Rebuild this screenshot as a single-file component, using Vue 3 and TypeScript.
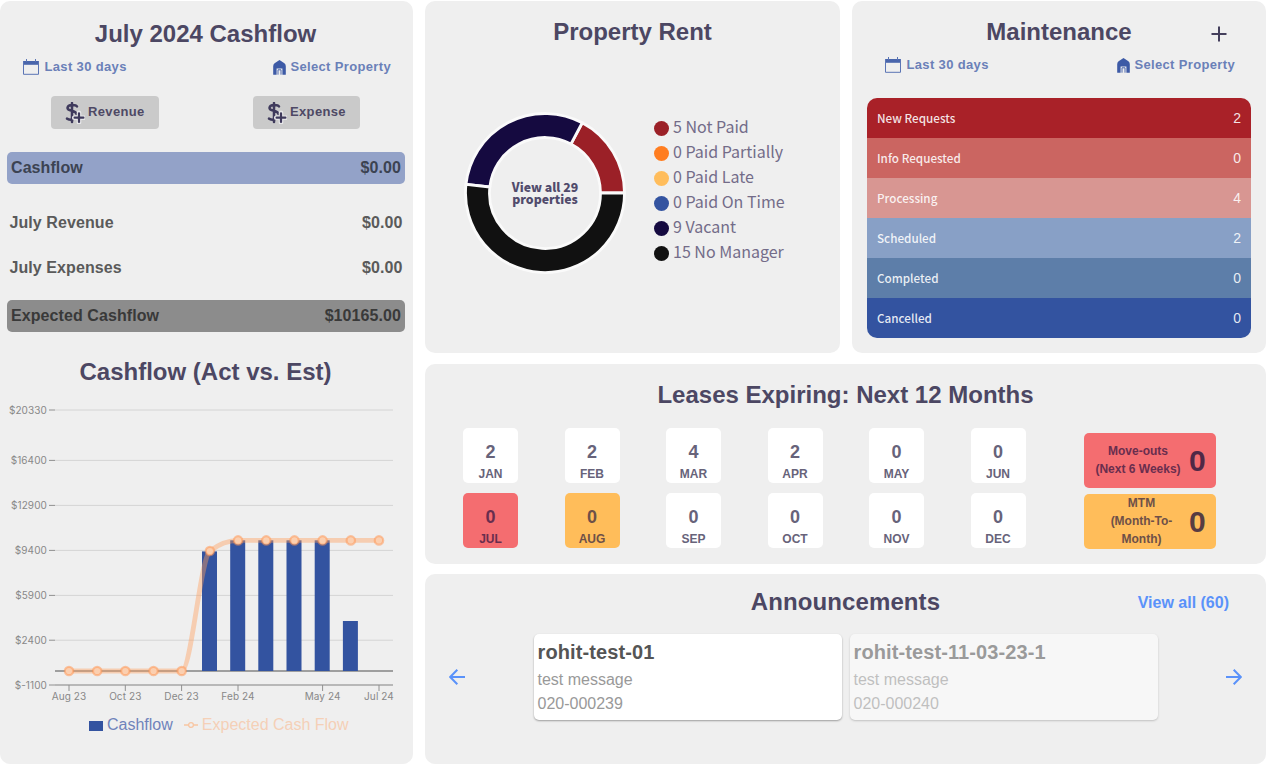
<script setup lang="ts">
const summary = [
  { label: 'Cashflow', value: '$0.00', tone: 'blue' },
  { label: 'July Revenue', value: '$0.00', tone: 'plain' },
  { label: 'July Expenses', value: '$0.00', tone: 'plain' },
  { label: 'Expected Cashflow', value: '$10165.00', tone: 'gray' },
]

const rent = [
  { count: 5, label: 'Not Paid', color: '#9b2027' },
  { count: 0, label: 'Paid Partially', color: '#ff7d20' },
  { count: 0, label: 'Paid Late', color: '#ffbd5c' },
  { count: 0, label: 'Paid On Time', color: '#3353a0' },
  { count: 9, label: 'Vacant', color: '#150a40' },
  { count: 15, label: 'No Manager', color: '#111111' },
]

function buildSlices() {
  const total = rent.reduce((sum, r) => sum + r.count, 0)
  const outer = 79.5
  const inner = 55.5
  const point = (r: number, a: number) =>
    `${(82 + r * Math.cos(a)).toFixed(2)} ${(82 - r * Math.sin(a)).toFixed(2)}`
  let angle = 0
  return rent
    .filter((r) => r.count > 0)
    .map((r) => {
      const start = angle
      const end = angle + (r.count / total) * Math.PI * 2
      angle = end
      const large = end - start > Math.PI ? 1 : 0
      return {
        color: r.color,
        d: `M${point(outer, start)}A${outer} ${outer} 0 ${large} 0 ${point(outer, end)}L${point(inner, end)}A${inner} ${inner} 0 ${large} 1 ${point(inner, start)}Z`,
      }
    })
}
const slices = buildSlices()

const maintenance = [
  { label: 'New Requests', count: 2, tone: 'm0' },
  { label: 'Info Requested', count: 0, tone: 'm1' },
  { label: 'Processing', count: 4, tone: 'm2' },
  { label: 'Scheduled', count: 2, tone: 'm3' },
  { label: 'Completed', count: 0, tone: 'm4' },
  { label: 'Cancelled', count: 0, tone: 'm5' },
]

const months = [
  { name: 'JAN', count: 2, tone: '' },
  { name: 'FEB', count: 2, tone: '' },
  { name: 'MAR', count: 4, tone: '' },
  { name: 'APR', count: 2, tone: '' },
  { name: 'MAY', count: 0, tone: '' },
  { name: 'JUN', count: 0, tone: '' },
  { name: 'JUL', count: 0, tone: 'red' },
  { name: 'AUG', count: 0, tone: 'amber' },
  { name: 'SEP', count: 0, tone: '' },
  { name: 'OCT', count: 0, tone: '' },
  { name: 'NOV', count: 0, tone: '' },
  { name: 'DEC', count: 0, tone: '' },
]

const announcements = [
  { title: 'rohit-test-01', message: 'test message', code: '020-000239', faded: false },
  { title: 'rohit-test-11-03-23-1', message: 'test message', code: '020-000240', faded: true },
]

const yTicks = [
  { label: '$20330', y: 20 },
  { label: '$16400', y: 70.4 },
  { label: '$12900', y: 115.4 },
  { label: '$9400', y: 160.4 },
  { label: '$5900', y: 205.4 },
  { label: '$2400', y: 250.2 },
  { label: '$-1100', y: 295 },
]
const xTicks = [
  { label: 'Aug 23', x: 69 },
  { label: 'Oct 23', x: 125.3 },
  { label: 'Dec 23', x: 181.6 },
  { label: 'Feb 24', x: 238 },
  { label: 'May 24', x: 322.6 },
  { label: 'Jul 24', x: 379 },
]
const bars = [
  { x: 202, y: 161.4 },
  { x: 230.2, y: 150.3 },
  { x: 258.3, y: 150.3 },
  { x: 286.5, y: 150.3 },
  { x: 314.7, y: 150.3 },
  { x: 342.9, y: 231 },
]
const points = Array.from({ length: 12 }, (_, i) => ({
  x: 69 + i * 28.18,
  y: i < 5 ? 281 : i === 5 ? 161 : 150.4,
}))
</script>

<template>
  <main class="board">
    <section class="panel cash">
      <h2>July 2024 Cashflow</h2>
      <div class="filters">
        <span class="filter">
          <svg class="cal" width="16" height="16" viewBox="0 0 16 16"><path d="M.5 2h15v3.800H.5z" fill="#4a66ac" /><path d="M.5 2v13.300h15V2M3.500 0v3M12.500 0v3" fill="none" stroke="#5b75b5" stroke-width="1" /></svg>
          Last 30 days
        </span>
        <span class="filter">
          <svg class="home" width="13" height="15" viewBox="0 0 13 15"><path d="M6.500 0 1.600 3.300Q.2 4.500 .2 6.200V14.700H3.600V8.500H9.400V14.700H12.800V6.200Q12.800 4.500 11.400 3.300Z" fill="#3d5aa6" /><path d="M5 14.700V9.800H8V14.700" fill="none" stroke="#3d5aa6" stroke-width=".9" /></svg>
          Select Property
        </span>
      </div>
      <div class="actions">
        <button v-for="name in ['Revenue', 'Expense']" :key="name" type="button">
          <svg width="20" height="22" viewBox="0 0 20 22"><path d="M12 4.500C11 2.700 3 1.800 2.500 5.800 2.300 9.500 11 8 11.500 12M2 16.600Q4.500 18 7.500 17.500M7 1V20" fill="none" stroke="#3f3a5c" stroke-width="2.500" stroke-linecap="round" /><path d="M14 10.800V20.500M9.200 15.700H18.800" stroke="#e6e6e8" stroke-width="4.600" stroke-linecap="round" /><path d="M14 11.300V20M9.600 15.700H18.400" stroke="#3f3a5c" stroke-width="2.200" stroke-linecap="round" /></svg>
          <span>{{ name }}</span>
        </button>
      </div>
      <div class="summary">
        <div v-for="row in summary" :key="row.label" class="sum-row" :class="row.tone">
          <span>{{ row.label }}</span><span>{{ row.value }}</span>
        </div>
      </div>
      <h2 class="chart-title">Cashflow (Act vs. Est)</h2>
      <svg class="chart" width="413" height="314" viewBox="0 0 413 314">
        <g v-for="t in yTicks" :key="t.label">
          <line x1="55" x2="393" :y1="t.y" :y2="t.y" stroke="#d4d4d4" />
          <line x1="49" x2="55" :y1="t.y" :y2="t.y" stroke="#909090" />
          <text x="47" :y="t.y + 3.900" text-anchor="end">{{ t.label }}</text>
        </g>
        <line x1="55" x2="393" y1="295" y2="295" stroke="#aaa" stroke-width="1.600" />
        <g v-for="t in xTicks" :key="t.label">
          <line :x1="t.x" :x2="t.x" y1="295" y2="301" stroke="#909090" />
          <text :x="t.x" y="310" text-anchor="middle">{{ t.label }}</text>
        </g>
        <line x1="55" x2="393" y1="281" y2="281" stroke="#858585" stroke-width="1.600" />
        <rect v-for="b in bars" :key="b.x" :x="b.x" :y="b.y" width="15" :height="281 - b.y" fill="#3353a0" />
        <path d="M69 281H181.700C191.100 281 200.400 168.100 209.900 161C219.300 153.900 228.700 150.400 238.100 150.400H379" fill="none" stroke="#ff9e5a" stroke-opacity=".42" stroke-width="4.800" />
        <circle v-for="p in points" :key="p.x" :cx="p.x" :cy="p.y" r="4.200" fill="#fbcfb0" stroke="#ff9450" stroke-opacity=".5" stroke-width="2.200" />
      </svg>
      <div class="legend">
        <i class="square"></i><span class="l-blue">Cashflow</span>
        <svg width="14" height="8" viewBox="0 0 14 8"><path d="M0 4H4.500M9.500 4H14" stroke="#f8c6a3" stroke-width="1.500" /><circle cx="7" cy="4" r="2.400" fill="none" stroke="#f8c6a3" stroke-width="1.300" /></svg>
        <span class="l-orange">Expected Cash Flow</span>
      </div>
    </section>

    <section class="panel rent">
      <h2>Property Rent</h2>
      <div class="rent-body">
        <div class="donut">
          <svg width="164" height="164" viewBox="0 0 164 164">
            <path v-for="s in slices" :key="s.color" :d="s.d" :fill="s.color" stroke="#fafafa" stroke-width="2.800" />
          </svg>
          <div class="donut-label">View all 29<br />properties</div>
        </div>
        <ul class="rent-list">
          <li v-for="r in rent" :key="r.label">
            <svg width="15" height="15"><circle cx="7.500" cy="7.500" r="7.500" :fill="r.color" /></svg>
            <span>{{ r.count }} {{ r.label }}</span>
          </li>
        </ul>
      </div>
    </section>

    <section class="panel maint">
      <h2>Maintenance</h2>
      <svg class="plus" width="16" height="16" viewBox="0 0 16 16"><path d="M8 .5V15.500M.5 8H15.500" stroke="#443f5c" stroke-width="2" /></svg>
      <div class="filters">
        <span class="filter">
          <svg class="cal" width="16" height="16" viewBox="0 0 16 16"><path d="M.5 2h15v3.800H.5z" fill="#4a66ac" /><path d="M.5 2v13.300h15V2M3.500 0v3M12.500 0v3" fill="none" stroke="#5b75b5" stroke-width="1" /></svg>
          Last 30 days
        </span>
        <span class="filter">
          <svg class="home" width="13" height="15" viewBox="0 0 13 15"><path d="M6.500 0 1.600 3.300Q.2 4.500 .2 6.200V14.700H3.600V8.500H9.400V14.700H12.800V6.200Q12.800 4.500 11.400 3.300Z" fill="#3d5aa6" /><path d="M5 14.700V9.800H8V14.700" fill="none" stroke="#3d5aa6" stroke-width=".9" /></svg>
          Select Property
        </span>
      </div>
      <div class="m-table">
        <div v-for="m in maintenance" :key="m.label" class="m-row" :class="m.tone">
          <span class="m-label">{{ m.label }}</span><span class="m-count">{{ m.count }}</span>
        </div>
      </div>
    </section>

    <section class="panel leases">
      <h2>Leases Expiring: Next 12 Months</h2>
      <div class="lease-body">
        <div class="months">
          <div v-for="m in months" :key="m.name" class="month" :class="m.tone">
            <b>{{ m.count }}</b><span>{{ m.name }}</span>
          </div>
        </div>
        <div class="wide-tiles">
          <div class="wide red"><span>Move-outs<br />(Next 6 Weeks)</span><b>0</b></div>
          <div class="wide amber"><span>MTM<br />(Month-To-<br />Month)</span><b>0</b></div>
        </div>
      </div>
    </section>

    <section class="panel news">
      <h2>Announcements</h2>
      <a class="view-all">View all (60)</a>
      <div class="news-body">
        <svg width="16" height="16" viewBox="0 0 16 16"><path d="M16 8H1.500M8.300 .8 1.200 8 8.300 15.200" fill="none" stroke="#5a92fa" stroke-width="2" /></svg>
        <div class="cards">
          <article v-for="a in announcements" :key="a.code" :class="{ faded: a.faded }">
            <h3>{{ a.title }}</h3>
            <p>{{ a.message }}</p>
            <p>{{ a.code }}</p>
          </article>
        </div>
        <svg width="16" height="16" viewBox="0 0 16 16"><path d="M0 8H14.500M7.700 .8 14.800 8 7.700 15.200" fill="none" stroke="#5a92fa" stroke-width="2" /></svg>
      </div>
    </section>
  </main>
</template>

<style>
body {
  margin: 0;
  background: #fff;
}
</style>

<style scoped>
* {
  box-sizing: border-box;
}
.board {
  width: 1268px;
  height: 765px;
  padding: 1px 2px 1px 0;
  display: grid;
  grid-template-columns: 413px 415px 414px;
  grid-template-rows: 352px 200px 190px;
  column-gap: 12px;
  row-gap: 10.500px;
  overflow: hidden;
  font-family: 'Liberation Sans', Arial, sans-serif;
  color: #4c4763;
}
.panel {
  position: relative;
  background: #efefef;
  border-radius: 10px;
}
.cash {
  grid-row: 1 / 4;
}
.leases,
.news {
  grid-column: 2 / 4;
}
h2 {
  margin: 0;
  font-size: 24px;
  line-height: 30px;
  font-weight: 700;
  text-align: center;
}
.cash > h2 {
  padding-right: 2px;
}
.cash > h2:first-child {
  padding-top: 18px;
}
.filters {
  display: flex;
  justify-content: space-between;
  height: 20px;
  padding: 0 22px 0 23px;
  margin-top: 8px;
}
.filter {
  display: flex;
  align-items: center;
  gap: 5.500px;
  font-size: 13px;
  font-weight: 700;
  letter-spacing: 0.35px;
  line-height: 20px;
  color: #6a80b8;
}
.home {
  margin-right: -1px;
}
.actions {
  display: flex;
  justify-content: space-between;
  padding: 0 53px 0 51px;
  margin-top: 19px;
}
button {
  display: flex;
  align-items: center;
  width: 108px;
  height: 33px;
  padding: 0 0 0 14px;
  gap: 3px;
  border: 0;
  border-radius: 4px;
  background: #cacaca;
  color: #4e4965;
  font: 700 13px 'Liberation Sans', Arial, sans-serif;
  letter-spacing: 0.35px;
}
button + button {
  width: 107px;
}
button span {
  padding-bottom: 2px;
}
.summary {
  padding: 23px 8px 0 7px;
}
.sum-row {
  display: flex;
  justify-content: space-between;
  height: 32px;
  line-height: 32px;
  padding: 0 2.500px;
  font-size: 16px;
  letter-spacing: 0.08px;
  font-weight: 700;
  color: #5a5a5a;
  border-radius: 5px;
}
.sum-row + .sum-row {
  margin-top: 13px;
}
.sum-row.blue {
  background: #93a2c8;
  color: #3c4352;
  padding: 0 4px;
  margin-bottom: 23px;
}
.sum-row.gray {
  background: #8c8c8c;
  color: #393939;
  padding: 0 4px;
  margin-top: 16px;
}
.cash > .chart-title {
  margin-top: 25px;
}
.chart {
  display: block;
  margin-top: 3px;
}
.chart text {
  font-family: Inter, sans-serif;
  font-size: 10px;
  letter-spacing: 0.1px;
  fill: #888;
}
.legend {
  display: flex;
  align-items: center;
  padding-left: 89px;
  margin-top: 11px;
  font-size: 16px;
  line-height: 20px;
}
.square {
  width: 14px;
  height: 10px;
  margin: 2px 4px 0 0;
  background: #3353a0;
}
.l-blue {
  color: #6f83bb;
  margin-right: 11px;
}
.l-orange {
  color: #f5d0b7;
  margin-left: 4px;
}
.rent h2,
.maint h2 {
  padding-top: 16px;
}
.rent-body {
  display: flex;
  padding: 64px 0 0 38px;
}
.donut {
  display: grid;
  width: 164px;
  height: 164px;
}
.donut > * {
  grid-area: 1 / 1;
}
.donut-label {
  place-self: center;
  text-align: center;
  padding-bottom: 1px;
  font: 900 12.300px/12px 'Noto Sans CJK SC', sans-serif;
  color: #514b6c;
}
.rent-list {
  list-style: none;
  margin: 3px 0 0 27px;
  padding: 0;
}
.rent-list li {
  display: flex;
  align-items: center;
  height: 25px;
  gap: 4px;
  font: 400 16px/25px 'Noto Sans CJK SC', sans-serif;
  color: #736c89;
}
.rent-list svg {
  margin-top: 4px;
}
.plus {
  position: absolute;
  top: 25px;
  right: 39px;
}
.maint .filters {
  padding: 0 31px 0 33px;
}
.m-table {
  margin: 23px 15px 0 15px;
  border-radius: 10px;
  overflow: hidden;
}
.m-row {
  display: flex;
  justify-content: space-between;
  align-items: center;
  height: 40px;
  padding: 0 10px;
  color: rgba(255, 255, 255, 0.88);
}
.m-label {
  font: 500 11.700px/20px 'Noto Sans CJK SC', sans-serif;
}
.m-count {
  font-size: 14px;
}
.m0 { background: #a92128; }
.m1 { background: #cb6561; }
.m2 { background: #d89692; }
.m3 { background: #88a0c6; }
.m4 { background: #5d7ea9; }
.m5 { background: #3353a0; }
.leases h2 {
  padding-top: 16px;
}
.lease-body {
  display: flex;
  padding: 18px 50px 0 38px;
  justify-content: space-between;
}
.months {
  display: grid;
  grid-template-columns: repeat(6, 55px);
  column-gap: 46.500px;
  row-gap: 10px;
}
.month {
  display: flex;
  flex-direction: column;
  align-items: center;
  height: 55px;
  padding-top: 14px;
  border-radius: 5px;
  background: #fff;
  font-size: 12px;
  font-weight: 700;
  line-height: 16px;
  color: #67637a;
}
.month b {
  font-size: 18px;
  line-height: 20px;
  margin-bottom: 4px;
}
.month.red,
.red {
  background: #f46d70;
  color: #692e4e;
}
.month.amber,
.amber {
  background: #ffbd5a;
  color: #6e5048;
}
.wide-tiles {
  display: flex;
  flex-direction: column;
  gap: 6px;
  padding-top: 5px;
}
.wide {
  display: flex;
  align-items: center;
  width: 132px;
  height: 55px;
  padding-left: 10px;
  border-radius: 5px;
  font-size: 12px;
  font-weight: 700;
  line-height: 18px;
}
.wide span {
  width: 88px;
  text-align: center;
  margin-right: 7px;
}
.wide.amber span {
  padding-left: 7px;
}
.wide b {
  font-size: 30px;
  padding-top: 1px;
  color: #502846;
}
.wide.amber b {
  color: #583c42;
}
.news h2 {
  padding-top: 13px;
  letter-spacing: 0.1px;
}
.view-all {
  position: absolute;
  top: 19px;
  right: 37px;
  font-size: 16px;
  line-height: 20px;
  font-weight: 700;
  color: #5a92fa;
}
.news-body {
  display: flex;
  align-items: center;
  justify-content: space-between;
  padding: 17px 24px 0 24px;
}
.cards {
  display: flex;
  gap: 8px;
}
article {
  width: 308px;
  height: 86px;
  padding: 4px 4px 0;
  background: #fff;
  border-radius: 5px;
  box-shadow: 0 1px 2px rgba(0, 0, 0, 0.35);
}
article.faded {
  opacity: 0.55;
}
h3 {
  margin: 0 0 2px;
  font-size: 20px;
  letter-spacing: 0.1px;
  line-height: 28px;
  color: #555;
}
p {
  margin: 0;
  font-size: 16px;
  line-height: 24px;
  color: #999;
}
</style>
